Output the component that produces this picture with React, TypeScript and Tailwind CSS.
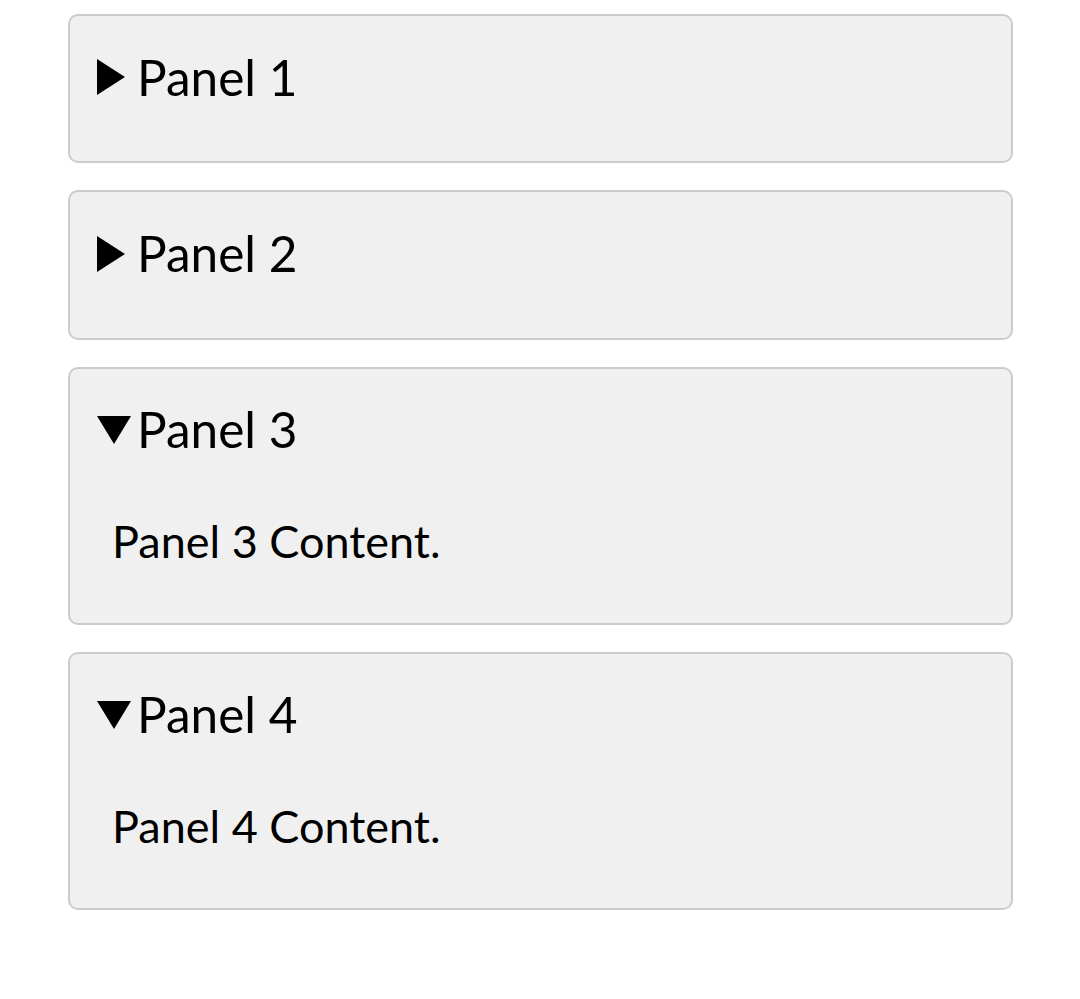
import { useState } from "react";

type Panel = { id: number; title: string; content: string };

const panels: Panel[] = [
  { id: 1, title: "Panel 1", content: "Panel 1 Content." },
  { id: 2, title: "Panel 2", content: "Panel 2 Content." },
  { id: 3, title: "Panel 3", content: "Panel 3 Content." },
  { id: 4, title: "Panel 4", content: "Panel 4 Content." },
];

function Marker({ open }: { open: boolean }) {
  return (
    <span className="w-[40px] flex-shrink-0 flex items-center">
      {open ? (
        <svg width="34" height="28" viewBox="0 0 34 28">
          <polygon points="0,0 34,0 17,28" fill="#000" />
        </svg>
      ) : (
        <svg width="28" height="36" viewBox="0 0 28 36">
          <polygon points="0,0 28,18 0,36" fill="#000" />
        </svg>
      )}
    </span>
  );
}

export default function App() {
  const [open, setOpen] = useState<Record<number, boolean>>({ 1: false, 2: false, 3: true, 4: true });

  return (
    <div
      className="min-h-screen bg-white text-black pt-[14px] pl-[68px] pr-[67px]"
      style={{ fontFamily: "Lato, 'Noto Sans', sans-serif" }}
    >
      <div className="flex flex-col gap-[27px]">
        {panels.map((p) => (
          <div
            key={p.id}
            className="bg-[#f0f0f0] border-2 border-[#cccccc] rounded-[10px] pt-[31.5px] pb-[54.5px] px-[27px]"
          >
            <button
              onClick={() => setOpen((s) => ({ ...s, [p.id]: !s[p.id] }))}
              className="flex items-center text-[49.5px] leading-[59.4px] text-left"
            >
              <Marker open={!!open[p.id]} />
              <span>{p.title}</span>
            </button>
            {open[p.id] && (
              <div className="mt-[54.5px] pl-[15px] text-[45px] leading-[54px]">{p.content}</div>
            )}
          </div>
        ))}
      </div>
    </div>
  );
}
